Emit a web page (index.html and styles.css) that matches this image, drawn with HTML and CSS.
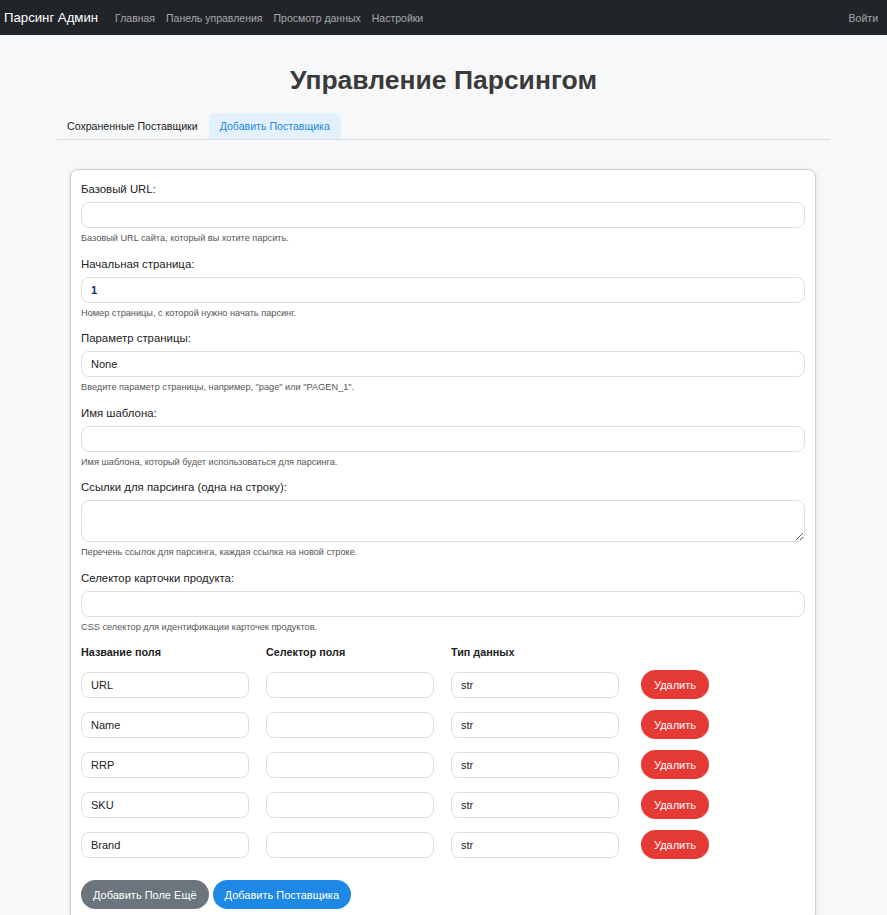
FILE: index.html
```html
<!DOCTYPE html>
<html lang="ru">
<head>
<meta charset="utf-8">
<title>Управление Парсингом</title>
<link rel="stylesheet" href="styles.css">
</head>
<body>
<nav class="navbar">
  <div class="nav-left">
    <a class="brand" href="#">Парсинг Админ</a>
    <a class="nav-link" href="#">Главная</a>
    <a class="nav-link" href="#">Панель управления</a>
    <a class="nav-link" href="#">Просмотр данных</a>
    <a class="nav-link" href="#">Настройки</a>
  </div>
  <a class="nav-link login" href="#">Войти</a>
</nav>
<main class="container">
  <h1 class="title">Управление Парсингом</h1>
  <div class="tabs">
    <button class="tab">Сохраненные Поставщики</button>
    <button class="tab active">Добавить Поставщика</button>
  </div>
  <form class="card">
    <div class="group">
      <label class="label">Базовый URL:</label>
      <input class="input" type="text">
      <div class="help">Базовый URL сайта, который вы хотите парсить.</div>
    </div>
    <div class="group">
      <label class="label">Начальная страница:</label>
      <input class="input num" type="text" value="1">
      <div class="help">Номер страницы, с которой нужно начать парсинг.</div>
    </div>
    <div class="group">
      <label class="label">Параметр страницы:</label>
      <input class="input" type="text" value="None">
      <div class="help">Введите параметр страницы, например, "page" или "PAGEN_1".</div>
    </div>
    <div class="group">
      <label class="label">Имя шаблона:</label>
      <input class="input" type="text">
      <div class="help">Имя шаблона, который будет использоваться для парсинга.</div>
    </div>
    <div class="group">
      <label class="label">Ссылки для парсинга (одна на строку):</label>
      <textarea class="input area"></textarea>
      <div class="help">Перечень ссылок для парсинга, каждая ссылка на новой строке.</div>
    </div>
    <div class="group">
      <label class="label">Селектор карточки продукта:</label>
      <input class="input" type="text">
      <div class="help">CSS селектор для идентификации карточек продуктов.</div>
    </div>
    <div class="fields">
      <div class="fhead">Название поля</div>
      <div class="fhead">Селектор поля</div>
      <div class="fhead">Тип данных</div>
      <div></div>

      <input class="input cell" value="URL"><input class="input cell"><input class="input cell" value="str"><div><button type="button" class="btn danger">Удалить</button></div>
      <input class="input cell" value="Name"><input class="input cell"><input class="input cell" value="str"><div><button type="button" class="btn danger">Удалить</button></div>
      <input class="input cell" value="RRP"><input class="input cell"><input class="input cell" value="str"><div><button type="button" class="btn danger">Удалить</button></div>
      <input class="input cell" value="SKU"><input class="input cell"><input class="input cell" value="str"><div><button type="button" class="btn danger">Удалить</button></div>
      <input class="input cell" value="Brand"><input class="input cell"><input class="input cell" value="str"><div><button type="button" class="btn danger">Удалить</button></div>
    </div>
    <div class="actions">
      <button type="button" class="btn secondary">Добавить Поле Ещё</button>
      <button type="button" class="btn primary">Добавить Поставщика</button>
    </div>
  </form>
</main>
</body>
</html>
```
FILE: styles.css
```css
* { box-sizing: border-box; }
body {
  margin: 0;
  background: #f7f8fa;
  font-family: "Liberation Sans", Arial, sans-serif;
  color: #222;
}
.navbar {
  height: 35px;
  background: #212529;
  display: flex;
  align-items: center;
  justify-content: space-between;
  padding: 0 9px 0 4px;
}
.nav-left { display: flex; align-items: center; }
.brand {
  color: #fff;
  font-size: 13.2px;
  text-decoration: none;
  margin-right: 17px;
}
.nav-link {
  color: rgba(255,255,255,0.6);
  font-size: 10.5px;
  text-decoration: none;
  margin-right: 11px;
}
.nav-link.login { margin-right: 0; }
.container {
  width: 773px;
  margin: 0 auto;
}
.title {
  text-align: center;
  font-size: 26.5px;
  font-weight: bold;
  color: #3a3a3a;
  margin: 29px 0 17px;
  line-height: 32px;
}
.tabs {
  display: flex;
  border-bottom: 1px solid #dcdde0;
}
.tab {
  font-family: inherit;
  font-size: 10.6px;
  height: 26px;
  padding: 0 11px 0 10px;
  border: none;
  background: transparent;
  color: #222;
  border-radius: 6px 6px 0 0;
}
.tab.active {
  background: #e3f0fd;
  color: #1e88e5;
  padding: 0 11px;
}
.card {
  margin: 29px 14px 0 13px;
  background: #fff;
  border: 1px solid #d0d0d0;
  border-radius: 8px;
  box-shadow: 0 1px 4px rgba(0,0,0,0.12);
  padding: 12px 10px 4px;
}
.group { margin-bottom: 12px; }
.label {
  display: block;
  font-size: 11.4px;
  line-height: 15px;
  margin-bottom: 5px;
}
.input {
  display: block;
  width: 100%;
  height: 26px;
  border: 1px solid #dedede;
  border-radius: 8px;
  padding: 0 9px;
  font-family: inherit;
  font-size: 11px;
  color: #222;
  background: #fff;
}
.input.num { color: #0f2f66; font-weight: bold; }
.input.area { height: 42px; resize: vertical; }
.help {
  font-size: 9.2px;
  color: #555;
  margin-top: 5px;
  line-height: 11.5px;
}
.fields {
  display: grid;
  grid-template-columns: 168px 168px 168px 1fr;
  column-gap: 17px;
  row-gap: 11px;
  align-items: center;
  margin-top: 6px;
}
.fields > div:nth-child(4n) { padding-left: 5px; }
.fhead {
  font-size: 10.8px;
  font-weight: bold;
  line-height: 15px;
  margin-bottom: -1px;
}
.btn {
  font-family: inherit;
  font-size: 11px;
  color: #fff;
  border: none;
  border-radius: 15px;
  height: 29px;
  padding: 0 12px;
}
.btn.danger { background: #e53935; padding: 0 13px; }
.btn.secondary { background: #6c757d; }
.btn.primary { background: #1e88e5; }
.actions {
  display: flex;
  gap: 4px;
  margin-top: 21px;
  padding-bottom: 8px;
}
```
